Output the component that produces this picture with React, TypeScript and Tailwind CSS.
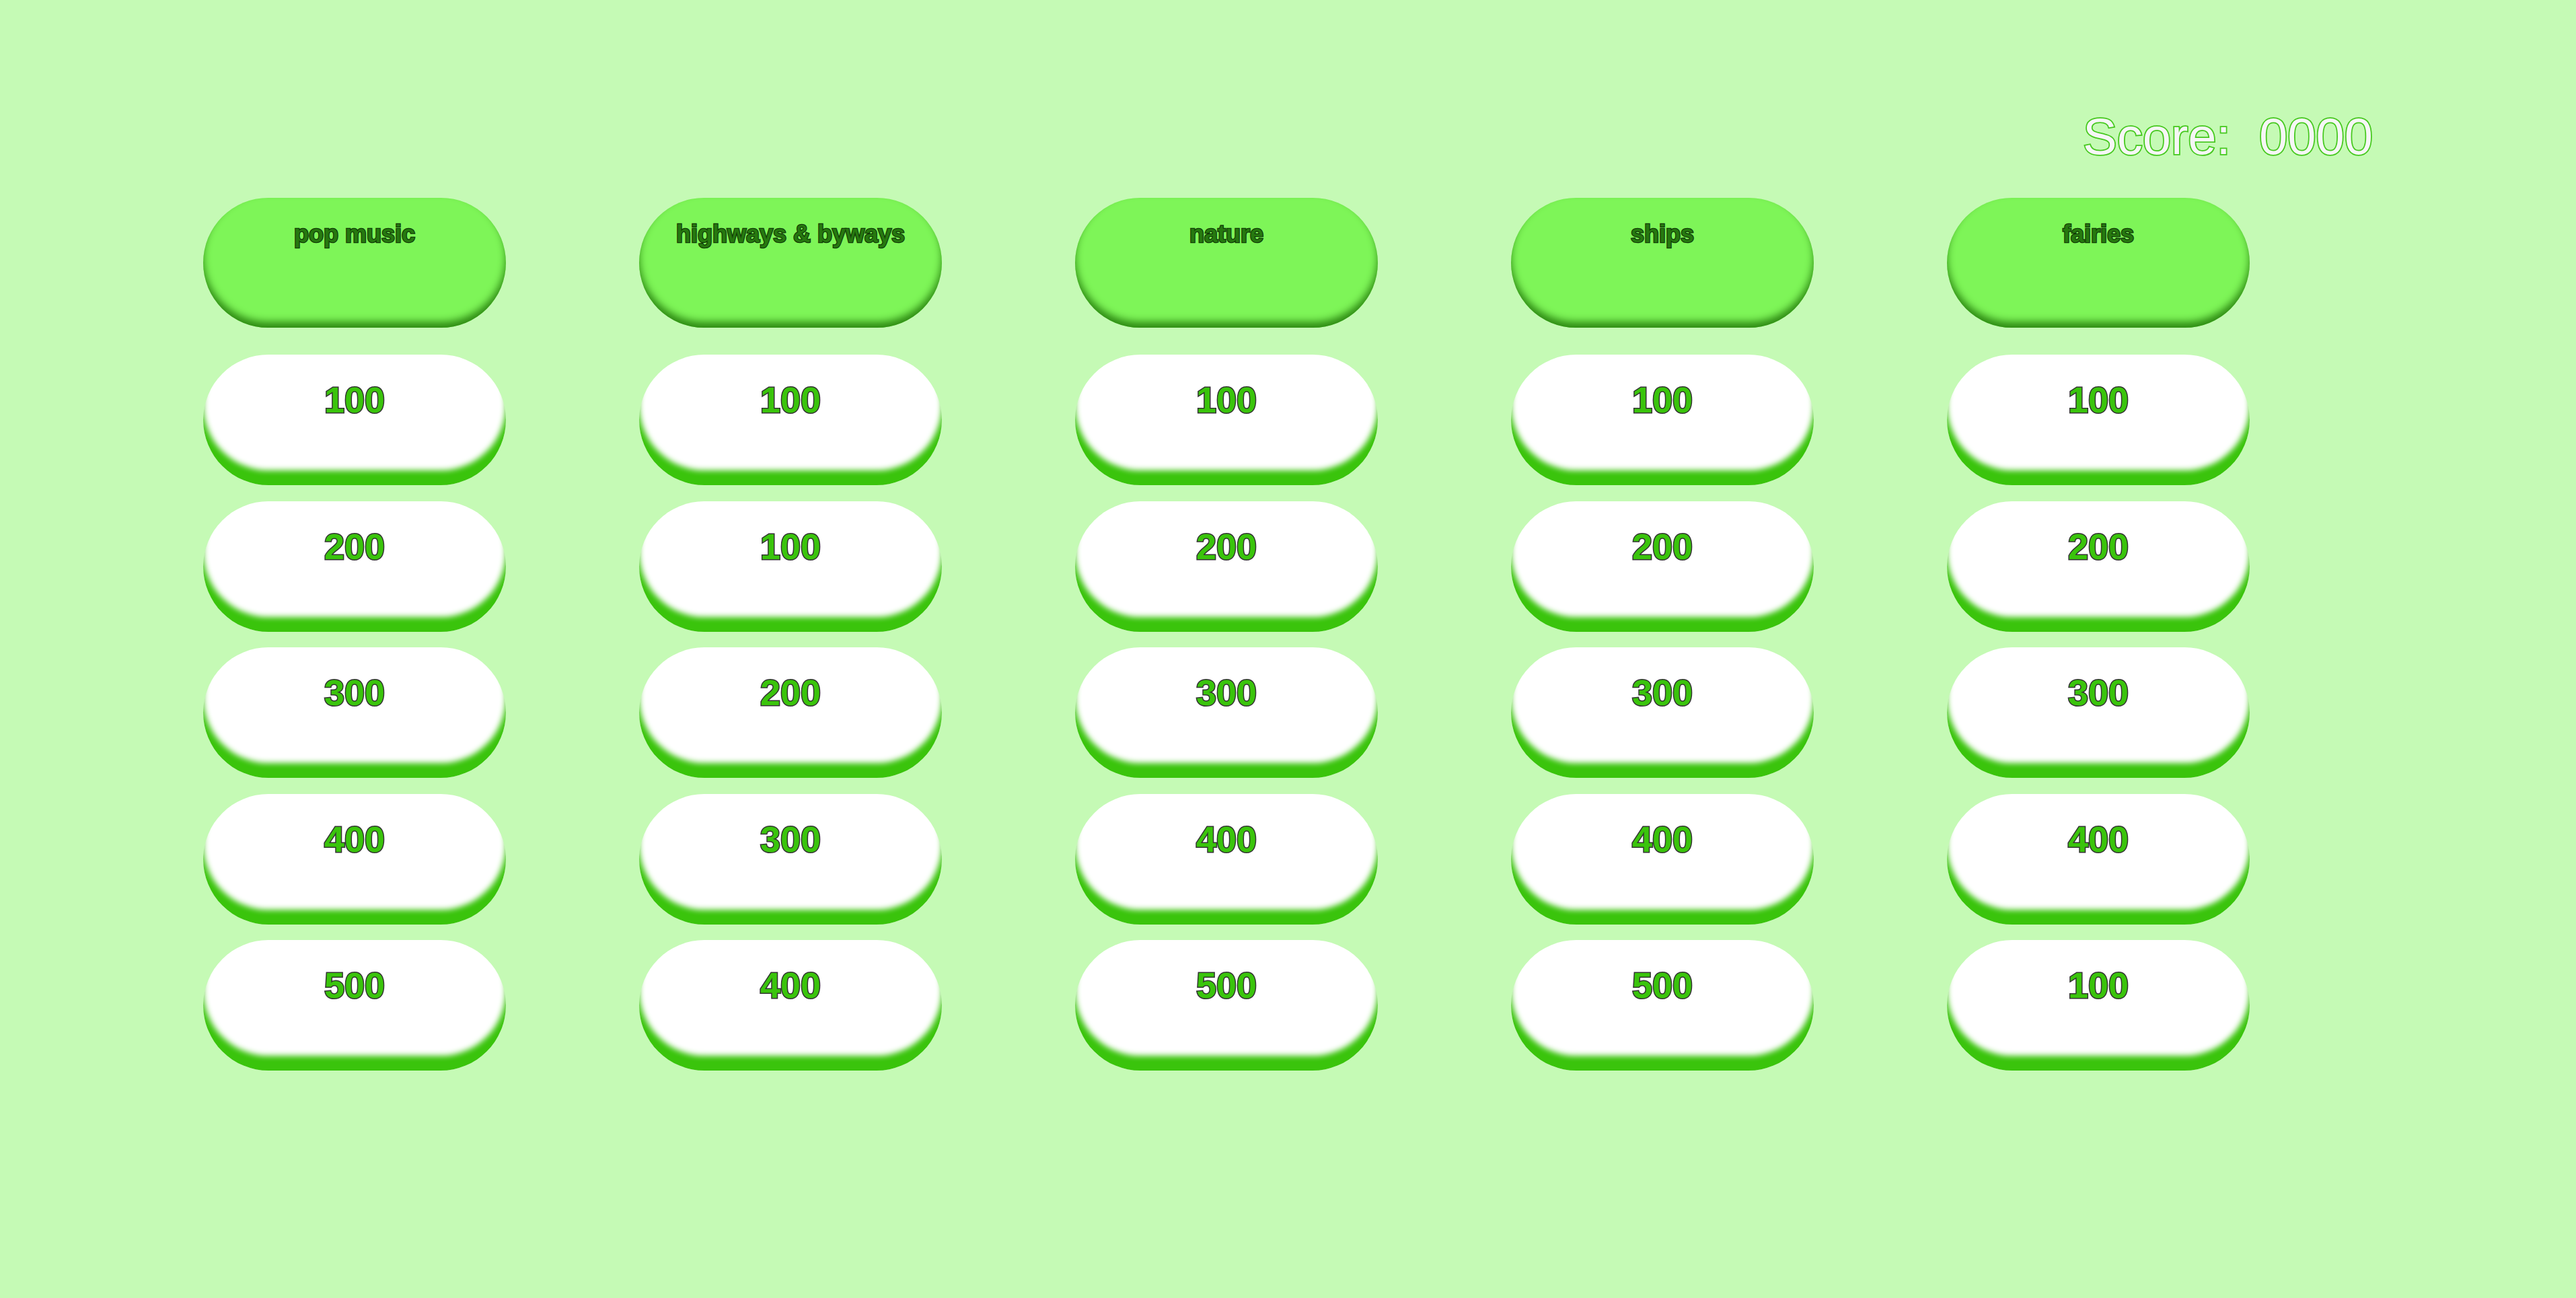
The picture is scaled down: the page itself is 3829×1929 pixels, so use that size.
const CATEGORIES: { title: string; values: number[] }[] = [
  { title: 'pop music', values: [100, 200, 300, 400, 500] },
  { title: 'highways & byways', values: [100, 100, 200, 300, 400] },
  { title: 'nature', values: [100, 200, 300, 400, 500] },
  { title: 'ships', values: [100, 200, 300, 400, 500] },
  { title: 'fairies', values: [100, 200, 300, 400, 100] },
];

function HeaderPill({ title }: { title: string }) {
  return (
    <div className="h-[193px] w-[450px] rounded-full bg-[#7ef558] pt-[36px] text-center shadow-[inset_0_-9px_12px_#2f8c14]">
      <span className="text-[36px] font-bold leading-none text-[#26780f] [-webkit-text-stroke:2.5px_#103a06] [paint-order:stroke_fill]">
        {title}
      </span>
    </div>
  );
}

function ValuePill({ value }: { value: number }) {
  return (
    <div className="h-[194px] w-[450px] rounded-full bg-white pt-[40px] text-center shadow-[inset_0_-22px_9px_#3ac40c]">
      <span className="text-[54px] font-bold leading-none text-[#3ac40c] [-webkit-text-stroke:3px_#333] [paint-order:stroke_fill]">
        {value}
      </span>
    </div>
  );
}

export default function App() {
  return (
    <div className="min-h-screen bg-[#c5fab5] px-[302px] font-['Liberation_Sans',Arial,sans-serif]">
      <div className="flex justify-end pt-[165px]">
        <span className="whitespace-pre text-[76px] leading-none text-[#f6f6f6] [-webkit-text-stroke:3.5px_#44c81c] [paint-order:stroke_fill]">
          {'Score:  0000'}
        </span>
      </div>
      <div className="mt-[53px] flex gap-[198px]">
        {CATEGORIES.map((cat, i) => (
          <div key={i} className="flex flex-col">
            <HeaderPill title={cat.title} />
            <div className="mt-[40px] flex flex-col gap-[23.5px]">
              {cat.values.map((v, j) => (
                <ValuePill key={j} value={v} />
              ))}
            </div>
          </div>
        ))}
      </div>
    </div>
  );
}
